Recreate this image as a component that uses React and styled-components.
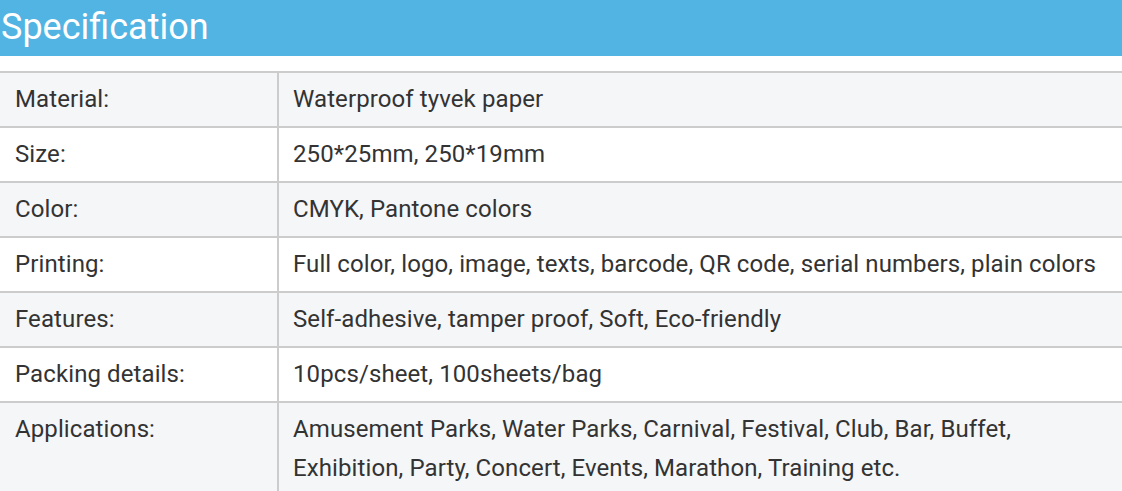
import styled, { createGlobalStyle } from 'styled-components';

const GlobalStyle = createGlobalStyle`
  body {
    margin: 0;
    background: #fff;
    font-family: Roboto, "Liberation Sans", sans-serif;
  }
`;

const Section = styled.section`
  width: 1122px;
  overflow: hidden;
`;

const Title = styled.h2`
  margin: 0 0 15px;
  height: 56px;
  background-color: #52b4e3;
  color: #fff;
  font-size: 36px;
  font-weight: 400;
  line-height: 54px;
  padding-left: 1px;
`;

const Table = styled.table`
  width: 100%;
  table-layout: fixed;
  border-collapse: collapse;
  font-size: 24px;
  letter-spacing: 0.1px;
  color: #333;
`;

const Row = styled.tr`
  background-color: ${({ $shaded }) => ($shaded ? '#f5f6f8' : '#fff')};
  border-top: 2px solid #cccccc;
`;

const Cell = styled.td`
  vertical-align: top;
  padding: 7px 12px 7px ${({ $label }) => ($label ? '15px' : '14px')};
  line-height: 39px;
  width: ${({ $label }) => ($label ? '250px' : 'auto')};
  border-left: ${({ $label }) => ($label ? 'none' : '2px solid #cccccc')};
`;

const specs = [
  ['Material:', 'Waterproof tyvek paper'],
  ['Size:', '250*25mm, 250*19mm'],
  ['Color:', 'CMYK, Pantone colors'],
  ['Printing:', 'Full color, logo, image, texts, barcode, QR code, serial numbers, plain colors'],
  ['Features:', 'Self-adhesive, tamper proof, Soft, Eco-friendly'],
  ['Packing details:', '10pcs/sheet, 100sheets/bag'],
  [
    'Applications:',
    'Amusement Parks, Water Parks, Carnival, Festival, Club, Bar, Buffet, Exhibition, Party, Concert, Events, Marathon, Training etc.',
  ],
];

const App = () => {
  return (
    <Section>
      <GlobalStyle />
      <Title>Specification</Title>
      <Table>
        <tbody>
          {specs.map(([label, value], i) => (
            <Row key={label} $shaded={i % 2 === 0}>
              <Cell $label>{label}</Cell>
              <Cell>{value}</Cell>
            </Row>
          ))}
        </tbody>
      </Table>
    </Section>
  );
};

export default App;
